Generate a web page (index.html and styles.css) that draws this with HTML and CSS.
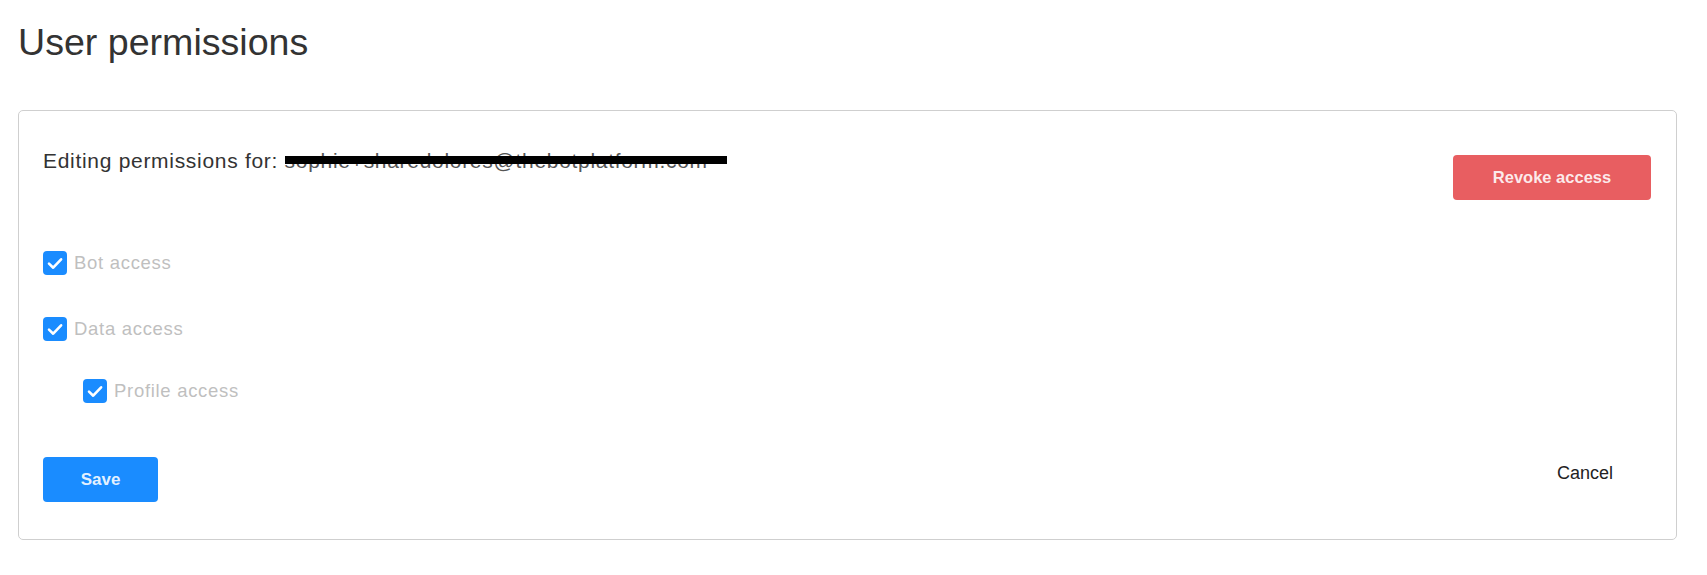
FILE: index.html
```html
<!DOCTYPE html>
<html lang="en">
<head>
<meta charset="utf-8">
<title>User permissions</title>
<link rel="stylesheet" href="styles.css">
</head>
<body>
<div class="page">
  <h1 class="title">User permissions</h1>
  <div class="card">
    <div class="card-header">
      <p class="editing">Editing permissions for: <span class="email">sophie+sharedolores@thebotplatform.com</span></p>
      <button class="btn btn-danger" type="button">Revoke access</button>
    </div>
    <div class="options">
      <label class="option">
        <span class="checkbox"><svg viewBox="0 0 24 24" width="24" height="24"><path d="M6 12.6l4.2 4.1 7.9-8.4" fill="none" stroke="#fff" stroke-width="2.6" stroke-linecap="round" stroke-linejoin="round"/></svg></span>
        <span class="option-label">Bot access</span>
      </label>
      <label class="option option-2">
        <span class="checkbox"><svg viewBox="0 0 24 24" width="24" height="24"><path d="M6 12.6l4.2 4.1 7.9-8.4" fill="none" stroke="#fff" stroke-width="2.6" stroke-linecap="round" stroke-linejoin="round"/></svg></span>
        <span class="option-label">Data access</span>
      </label>
      <label class="option option-sub">
        <span class="checkbox"><svg viewBox="0 0 24 24" width="24" height="24"><path d="M6 12.6l4.2 4.1 7.9-8.4" fill="none" stroke="#fff" stroke-width="2.6" stroke-linecap="round" stroke-linejoin="round"/></svg></span>
        <span class="option-label">Profile access</span>
      </label>
    </div>
    <div class="card-footer">
      <button class="btn btn-primary" type="button">Save</button>
      <button class="btn btn-text" type="button">Cancel</button>
    </div>
  </div>
</div>
</body>
</html>
```

FILE: styles.css
```css
html, body {
  margin: 0;
  padding: 0;
  background: #fff;
}

body {
  font-family: "Liberation Sans", Arial, Helvetica, sans-serif;
  color: #333;
}

.page {
  padding: 21px 30px 0 18px;
}

.title {
  margin: 0 0 47px 0;
  font-size: 37.6px;
  line-height: 42px;
  font-weight: 400;
  color: #333;
}

.card {
  border: 1px solid #cfcfcf;
  border-radius: 5px;
  padding: 37px 25px 37px 24px;
  display: flex;
  flex-direction: column;
}

.card-header {
  display: flex;
  justify-content: space-between;
  align-items: flex-start;
}

.editing {
  margin: 0;
  font-size: 21px;
  line-height: 25px;
  letter-spacing: 0.7px;
  color: #333;
}

.email {
  position: relative;
  color: #555;
}

.email::after {
  content: "";
  position: absolute;
  left: 0;
  top: 7px;
  width: 442px;
  height: 8px;
  background: #000;
}

.btn {
  font-family: "Liberation Sans", Arial, Helvetica, sans-serif;
  border: none;
  border-radius: 4px;
  cursor: pointer;
  font-weight: 700;
  height: 45px;
  padding: 0;
}

.btn-danger {
  margin-top: 7px;
  width: 198px;
  background: #e85e61;
  color: rgba(255, 255, 255, 0.88);
  font-size: 16.5px;
}

.options {
  display: flex;
  flex-direction: column;
  margin-top: 51px;
}

.option {
  display: flex;
  align-items: center;
  gap: 7px;
  height: 24px;
}

.option-2 {
  margin-top: 42px;
}

.option-sub {
  margin-top: 38px;
  margin-left: 40px;
}

.checkbox {
  width: 24px;
  height: 24px;
  border-radius: 4px;
  background: #1a8cff;
  display: flex;
  flex: none;
}

.option-label {
  font-size: 18.5px;
  line-height: 24px;
  letter-spacing: 0.7px;
  color: #bfbfbf;
}

.card-footer {
  display: flex;
  justify-content: space-between;
  align-items: flex-start;
  margin-top: 54px;
}

.btn-primary {
  width: 115px;
  background: #1a8cff;
  color: rgba(255, 255, 255, 0.9);
  font-size: 17px;
}

.btn-text {
  background: transparent;
  color: #222;
  font-weight: 400;
  font-size: 18px;
  height: 33px;
  padding: 0 38px;
}
```
